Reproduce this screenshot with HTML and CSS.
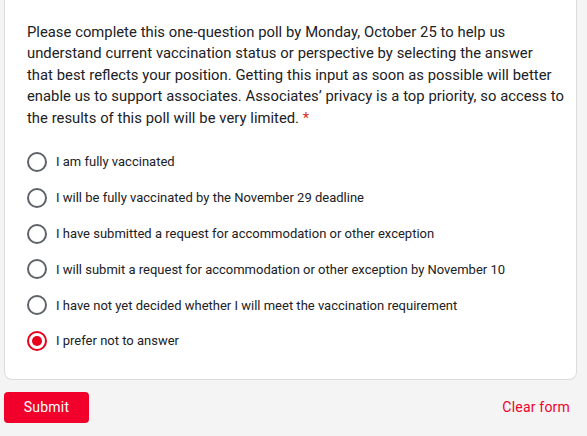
FILE: index.html
```html
<!DOCTYPE html>
<html>
<head>
<meta charset="utf-8">
<link rel="stylesheet" href="styles.css">
</head>
<body>
<div class="page">
  <div class="card">
    <div class="question">Please complete this one-question poll by Monday, October 25 to help us<br>understand current vaccination status or perspective by selecting the answer<br>that best reflects your position. Getting this input as soon as possible will better<br>enable us to support associates. Associates’ privacy is a top priority, so access to<br>the results of this poll will be very limited.<span class="req"> *</span></div>
    <div class="options">
      <div class="option"><span class="radio"></span><span class="label">I am fully vaccinated</span></div>
      <div class="option"><span class="radio"></span><span class="label">I will be fully vaccinated by the November 29 deadline</span></div>
      <div class="option"><span class="radio"></span><span class="label">I have submitted a request for accommodation or other exception</span></div>
      <div class="option"><span class="radio"></span><span class="label">I will submit a request for accommodation or other exception by November 10</span></div>
      <div class="option"><span class="radio"></span><span class="label">I have not yet decided whether I will meet the vaccination requirement</span></div>
      <div class="option"><span class="radio checked"></span><span class="label">I prefer not to answer</span></div>
    </div>
  </div>
  <div class="actions">
    <button class="submit">Submit</button>
    <span class="clear">Clear form</span>
  </div>
</div>
</body>
</html>
```
FILE: styles.css
```css
html, body {
  margin: 0;
  padding: 0;
  background: #f4f4f4;
}
.page {
  padding: 0 10px 0 4px;
}
.card {
  background: #fff;
  border: 1px solid #dadce0;
  border-top: none;
  border-radius: 0 0 8px 8px;
  padding: 22px 8px 20px 22px;
}
.question {
  font-family: Roboto, "Liberation Sans", sans-serif;
  font-size: 14.8px;
  line-height: 21.4px;
  color: #202124;
  white-space: nowrap;
  word-spacing: 0.2px;
}
.req {
  color: #d93025;
}
.options {
  margin-top: 15px;
  display: flex;
  flex-direction: column;
}
.option {
  height: 35.8px;
  display: flex;
  align-items: center;
  gap: 9px;
}
.radio {
  width: 16px;
  height: 16px;
  border: 2px solid #5f6368;
  border-radius: 50%;
  box-sizing: content-box;
  display: flex;
  align-items: center;
  justify-content: center;
  flex: none;
}
.radio.checked {
  border-color: #e8001c;
}
.radio.checked::after {
  content: "";
  width: 10px;
  height: 10px;
  border-radius: 50%;
  background: #e8001c;
}
.label {
  font-family: Roboto, "Liberation Sans", sans-serif;
  font-size: 13px;
  color: #202124;
}
.actions {
  margin-top: 12px;
  display: flex;
  justify-content: space-between;
  align-items: center;
}
.submit {
  background: #f0002a;
  color: #fff;
  border: none;
  border-radius: 4px;
  width: 85px;
  height: 31px;
  font-family: Roboto, "Liberation Sans", sans-serif;
  font-size: 14px;
  font-weight: 400;
  letter-spacing: 0.2px;
}
.clear {
  color: #f0002a;
  font-family: Roboto, "Liberation Sans", sans-serif;
  font-size: 14px;
  font-weight: 400;
  letter-spacing: 0.2px;
  margin-right: 7px;
}
```
